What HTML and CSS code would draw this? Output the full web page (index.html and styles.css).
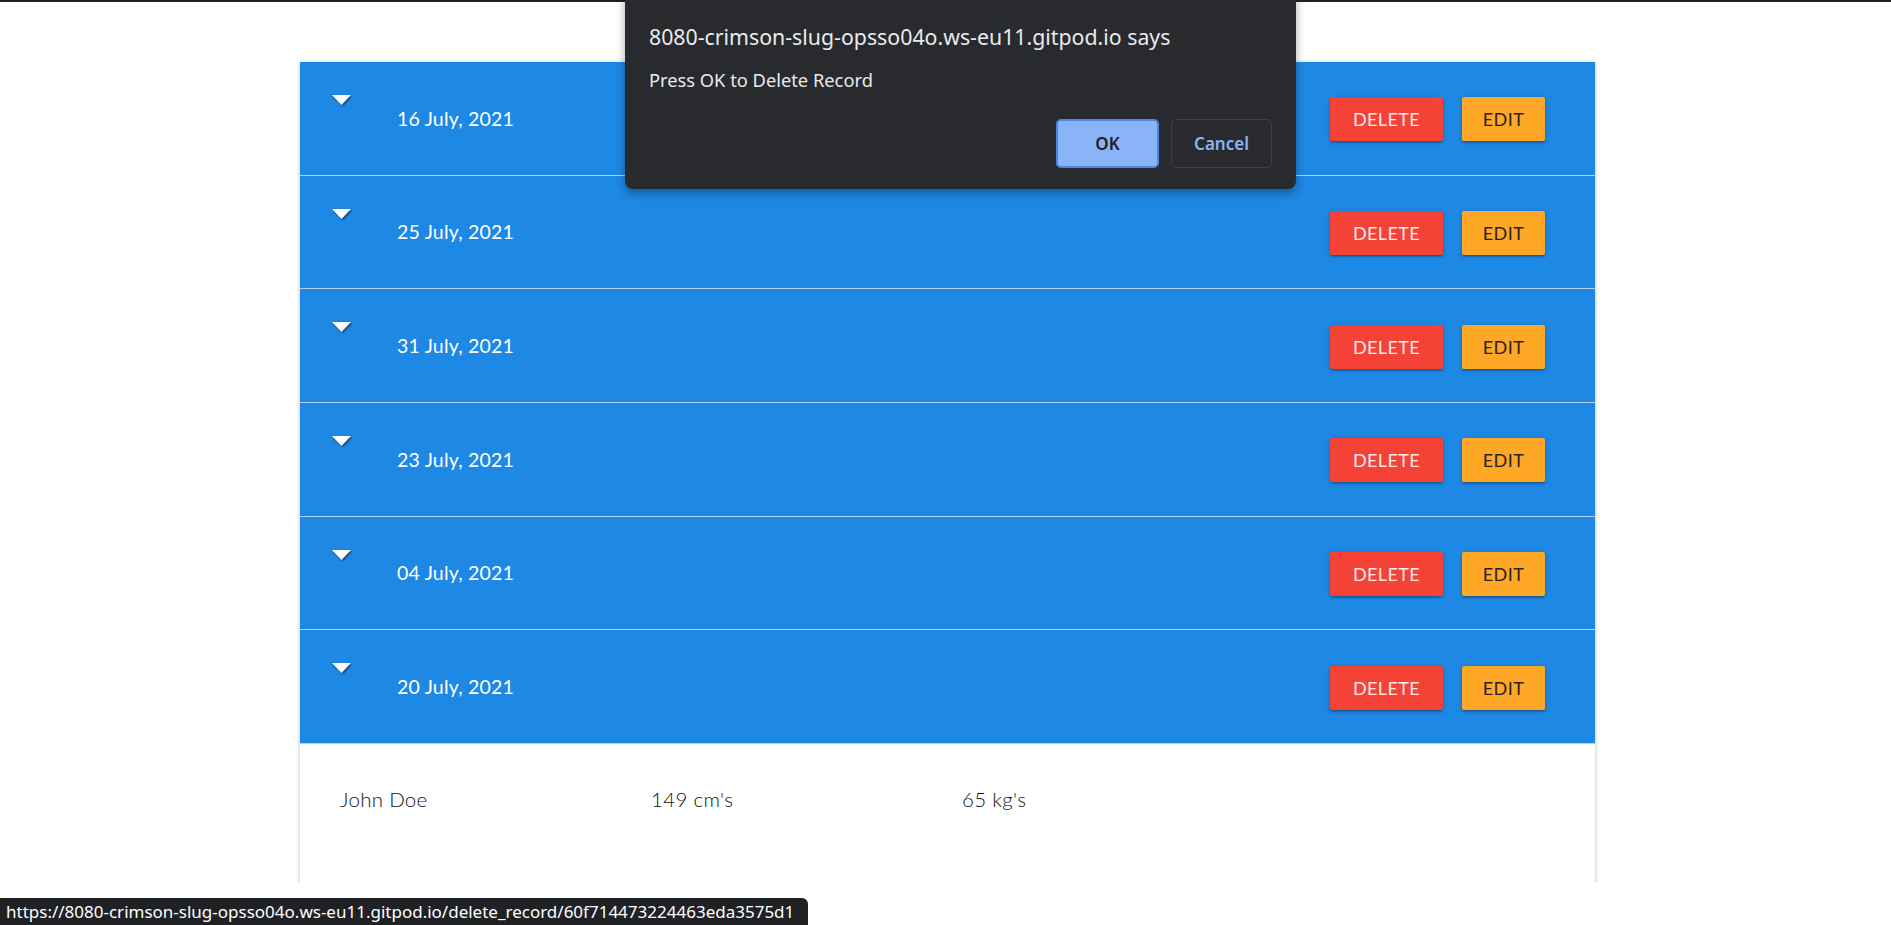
FILE: index.html
```html
<!DOCTYPE html>
<html>
<head>
<meta charset="utf-8">
<link rel="stylesheet" href="styles.css">
</head>
<body>
<div class="topline"></div>
<ul class="collapsible">
  <li class="item">
    <div class="header">
      <span class="arrow"><svg width="19" height="11" viewBox="0 0 19 11"><polygon points="0,0 19,0 9.5,10" fill="#fff"/></svg></span>
      <span class="date">16 July, 2021</span>
      <span class="actions"><a class="btn btn-del">DELETE</a><a class="btn btn-edit">EDIT</a></span>
    </div>
  </li>
  <li class="item">
    <div class="header">
      <span class="arrow"><svg width="19" height="11" viewBox="0 0 19 11"><polygon points="0,0 19,0 9.5,10" fill="#fff"/></svg></span>
      <span class="date">25 July, 2021</span>
      <span class="actions"><a class="btn btn-del">DELETE</a><a class="btn btn-edit">EDIT</a></span>
    </div>
  </li>
  <li class="item">
    <div class="header">
      <span class="arrow"><svg width="19" height="11" viewBox="0 0 19 11"><polygon points="0,0 19,0 9.5,10" fill="#fff"/></svg></span>
      <span class="date">31 July, 2021</span>
      <span class="actions"><a class="btn btn-del">DELETE</a><a class="btn btn-edit">EDIT</a></span>
    </div>
  </li>
  <li class="item">
    <div class="header">
      <span class="arrow"><svg width="19" height="11" viewBox="0 0 19 11"><polygon points="0,0 19,0 9.5,10" fill="#fff"/></svg></span>
      <span class="date">23 July, 2021</span>
      <span class="actions"><a class="btn btn-del">DELETE</a><a class="btn btn-edit">EDIT</a></span>
    </div>
  </li>
  <li class="item">
    <div class="header">
      <span class="arrow"><svg width="19" height="11" viewBox="0 0 19 11"><polygon points="0,0 19,0 9.5,10" fill="#fff"/></svg></span>
      <span class="date">04 July, 2021</span>
      <span class="actions"><a class="btn btn-del">DELETE</a><a class="btn btn-edit">EDIT</a></span>
    </div>
  </li>
  <li class="item">
    <div class="header">
      <span class="arrow"><svg width="19" height="11" viewBox="0 0 19 11"><polygon points="0,0 19,0 9.5,10" fill="#fff"/></svg></span>
      <span class="date">20 July, 2021</span>
      <span class="actions"><a class="btn btn-del">DELETE</a><a class="btn btn-edit">EDIT</a></span>
    </div>
    <div class="body">
      <span>John Doe</span>
      <span>149 cm's</span>
      <span>65 kg's</span>
    </div>
  </li>
</ul>

<div class="dialog">
  <div class="dlg-title">8080-crimson-slug-opsso04o.ws-eu11.gitpod.io says</div>
  <div class="dlg-msg">Press OK to Delete Record</div>
  <div class="dlg-buttons">
    <button class="dlg-ok">OK</button>
    <button class="dlg-cancel">Cancel</button>
  </div>
</div>

<div class="status">https://8080-crimson-slug-opsso04o.ws-eu11.gitpod.io/delete_record/60f714473224463eda3575d1</div>
</body>
</html>
```
FILE: styles.css
```css
html, body {
  margin: 0;
  padding: 0;
  background: #fff;
  font-family: Lato, "Open Sans", sans-serif;
}
.topline {
  height: 2px;
  background: #202124;
}
.collapsible {
  list-style: none;
  margin: 60px 0 0 300px;
  padding: 0;
  width: 1295px;
  box-shadow: 0 2px 2px 0 rgba(0,0,0,.14), 0 3px 1px -2px rgba(0,0,0,.12), 0 1px 5px 0 rgba(0,0,0,.2);
}
.header {
  box-sizing: border-box;
  height: 113.67px;
  background: #1e88e5;
  border-bottom: 1px solid #b3d4f5;
  display: flex;
  align-items: center;
  color: #fff;
}
.arrow {
  align-self: flex-start;
  margin: 33px 0 0 32px;
  width: 19px;
  height: 11px;
  display: flex;
}
.arrow svg {
  filter: drop-shadow(1px 1.5px 1px rgba(0,0,0,.6));
}
.date {
  margin-left: 46px;
  font-size: 19.5px;
  letter-spacing: .2px;
  flex: 1;
}
.actions {
  display: flex;
  gap: 19px;
  margin-right: 50px;
  margin-top: 2px;
}
.btn {
  display: flex;
  align-items: center;
  justify-content: center;
  height: 44px;
  border-radius: 2px;
  font-size: 18px;
  font-weight: 400;
  letter-spacing: .4px;
  box-shadow: 0 2px 2px 0 rgba(0,0,0,.14), 0 3px 1px -2px rgba(0,0,0,.12), 0 1px 5px 0 rgba(0,0,0,.2);
}
.btn-del {
  width: 113px;
  background: #f44336;
  color: #fde8ea;
}
.btn-edit {
  width: 83px;
  background: #ffa726;
  color: #2a2420;
}
.body {
  height: 139px;
  box-sizing: border-box;
  padding: 43px 0 0 40px;
  display: grid;
  grid-template-columns: 311px 311px 311px;
  font-size: 20.5px;
  font-weight: 300;
  letter-spacing: .3px;
  color: #111;
}
.dialog {
  position: absolute;
  left: 625px;
  top: -10px;
  width: 671px;
  height: 199px;
  box-sizing: border-box;
  background: #292a2d;
  border-radius: 8px;
  box-shadow: 0 4px 10px rgba(0,0,0,.35);
  padding: 33px 24px 0 24px;
  font-family: "Noto Sans", "Open Sans", sans-serif;
  color: #e8eaed;
}
.dlg-title {
  font-size: 21.3px;
  line-height: 28px;
}
.dlg-msg {
  margin-top: 17px;
  font-size: 18.3px;
  line-height: 24px;
}
.dlg-buttons {
  display: flex;
  justify-content: flex-end;
  gap: 12px;
  margin-top: 27px;
}
.dlg-buttons button {
  font-family: "Noto Sans", "Open Sans", sans-serif;
  font-size: 17px;
  font-weight: 600;
  border-radius: 5px;
  height: 49px;
}
.dlg-ok {
  width: 103px;
  background: #8ab4f8;
  color: #202124;
  border: 2px solid #4d86e8;
}
.dlg-cancel {
  width: 101px;
  background: transparent;
  color: #8ab4f8;
  border: 1px solid #3c4043;
}
.status {
  position: fixed;
  left: 0;
  bottom: 0;
  height: 27px;
  width: 808px;
  box-sizing: border-box;
  padding: 2px 0 0 6px;
  background: #202124;
  color: #fff;
  border-top-right-radius: 6px;
  font-family: "Noto Sans", "Open Sans", sans-serif;
  font-size: 17px;
  white-space: nowrap;
  overflow: hidden;
}
```
